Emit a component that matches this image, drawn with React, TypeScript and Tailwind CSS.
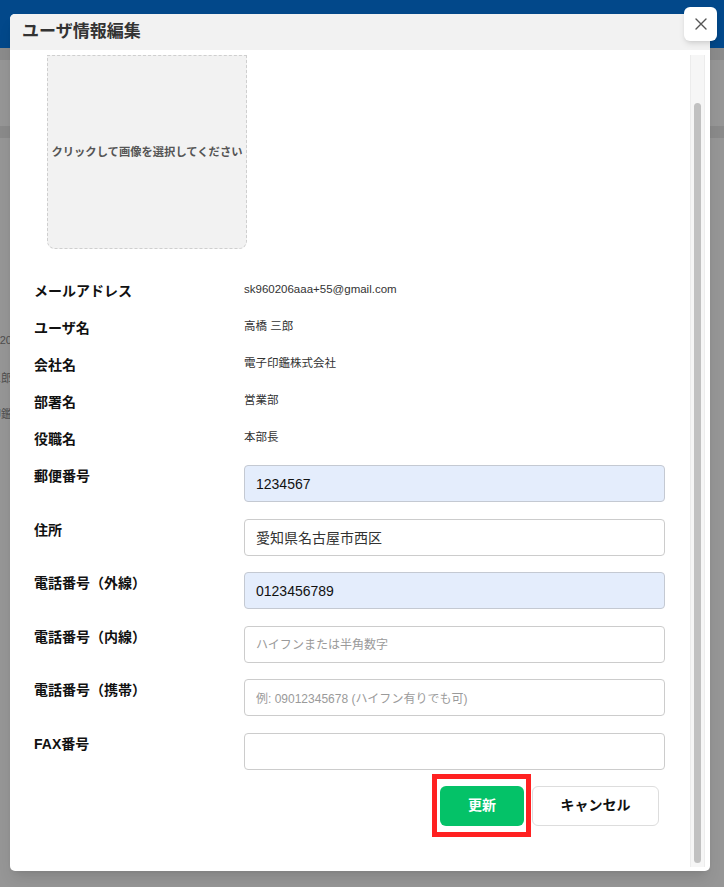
const font = { fontFamily: '"Liberation Sans", "Noto Sans CJK JP", sans-serif' };

const info = [
  { label: "メールアドレス", value: "sk960206aaa+55@gmail.com" },
  { label: "ユーザ名", value: "高橋 三郎" },
  { label: "会社名", value: "電子印鑑株式会社" },
  { label: "部署名", value: "営業部" },
  { label: "役職名", value: "本部長" },
];

const fields = [
  { label: "郵便番号", value: "1234567", autofill: true },
  { label: "住所", value: "愛知県名古屋市西区" },
  { label: "電話番号（外線）", value: "0123456789", autofill: true },
  { label: "電話番号（内線）", placeholder: "ハイフンまたは半角数字" },
  { label: "電話番号（携帯）", placeholder: "例: 09012345678 (ハイフン有りでも可)" },
  { label: "FAX番号" },
];

function Backdrop() {
  return (
    <div className="flex h-full flex-col">
      <div className="h-[48px] bg-[#02488a]" />
      <div className="h-[12px] bg-[#8b8b8b]" />
      <div className="h-[66px]" />
      <div className="h-[12px] bg-[#8a8a8a]" />
      <div className="ml-[-50px] flex w-[62px] flex-col items-end pt-[194px] text-[11px] text-[#4e4e4e]">
        <span className="h-[38px]">2020</span>
        <span className="h-[36px]">三郎</span>
        <span>印鑑</span>
      </div>
    </div>
  );
}

function ImagePicker() {
  return (
    <div className="ml-[13px] flex h-[194px] w-[200px] items-center justify-center rounded-b-[8px] border border-dashed border-[#cfcfcf] bg-[#f2f2f2]">
      <span className="text-[11.3px] font-bold text-[#555]">クリックして画像を選択してください</span>
    </div>
  );
}

function InfoRow({ label, value }: { label: string; value: string }) {
  return (
    <div className="flex h-[37px] items-start">
      <span className="w-[210px] text-[14px] font-bold leading-[20px] text-[#111]">{label}</span>
      <span className="mt-[1px] text-[11.5px] leading-[14px] text-[#333]">{value}</span>
    </div>
  );
}

function FieldRow({
  label,
  value,
  placeholder,
  autofill,
}: {
  label: string;
  value?: string;
  placeholder?: string;
  autofill?: boolean;
}) {
  return (
    <div className="flex items-start">
      <span className="mt-[1px] w-[210px] text-[14px] font-bold leading-[20px] text-[#111]">{label}</span>
      <input
        defaultValue={value}
        placeholder={placeholder}
        className={
          autofill
            ? "h-[37px] flex-1 rounded-[4px] border border-[#c4c9d2] bg-[#e4edfc] px-[11px] text-[14px] text-[#111] outline-none"
            : "h-[37px] flex-1 rounded-[4px] border border-[#cccccc] bg-white px-[11px] text-[14px] text-[#333] outline-none placeholder:text-[12px] placeholder:text-[#9a9a9a]"
        }
        style={font}
      />
    </div>
  );
}

export default function App() {
  return (
    <div className="relative h-[887px] w-[724px] overflow-hidden bg-[#969696]" style={font}>
      <Backdrop />

      <div className="absolute left-[10px] top-[14px] flex h-[857px] w-[700px] flex-col rounded-[5px] bg-white shadow-lg">
        <div className="flex h-[36px] items-center rounded-t-[5px] bg-[#f2f2f2] pl-[12px]">
          <h1 className="text-[17px] font-semibold text-[#333]">ユーザ情報編集</h1>
        </div>

        <div className="flex flex-1">
          <div className="flex flex-1 flex-col pl-[24px] pr-[25px] pt-[5px]">
            <ImagePicker />

            <div className="mt-[32px] flex flex-col">
              {info.map((r) => (
                <InfoRow key={r.label} {...r} />
              ))}
            </div>

            <div className="-mt-[1px] flex flex-col gap-[16.6px]">
              {fields.map((f) => (
                <FieldRow key={f.label} {...f} />
              ))}
            </div>

            <div className="mt-[16px] flex justify-end gap-[8px] pr-[6px]">
              <div className="relative">
                <button className="h-[40px] w-[84px] rounded-[6px] bg-[#04c268] text-[14px] font-bold text-white">
                  更新
                </button>
                <span className="absolute -left-[8px] -top-[12px] h-[63px] w-[99px] border-[5px] border-[#ff2121]" />
              </div>
              <button className="h-[40px] w-[127px] rounded-[6px] border border-[#dddddd] bg-white text-[14px] font-bold text-[#111]">
                キャンセル
              </button>
            </div>
          </div>

          <div className="mb-[4px] mr-[5px] mt-[5px] flex w-[15px] flex-col border-x border-[#ececec] bg-[#f6f6f6] px-[3px] pb-[4px] pt-[48px]">
            <div className="flex-1 rounded-full bg-[#c1c1c1]" />
          </div>
        </div>

        <button className="absolute left-[674px] top-[-7px] flex h-[34px] w-[33px] items-center justify-center rounded-[6px] bg-white shadow-md">
          <svg width="12" height="12" viewBox="0 0 12 12" fill="none" stroke="#555" strokeWidth="1.4" strokeLinecap="round">
            <path d="M1 1l10 10M11 1L1 11" />
          </svg>
        </button>
      </div>
    </div>
  );
}
